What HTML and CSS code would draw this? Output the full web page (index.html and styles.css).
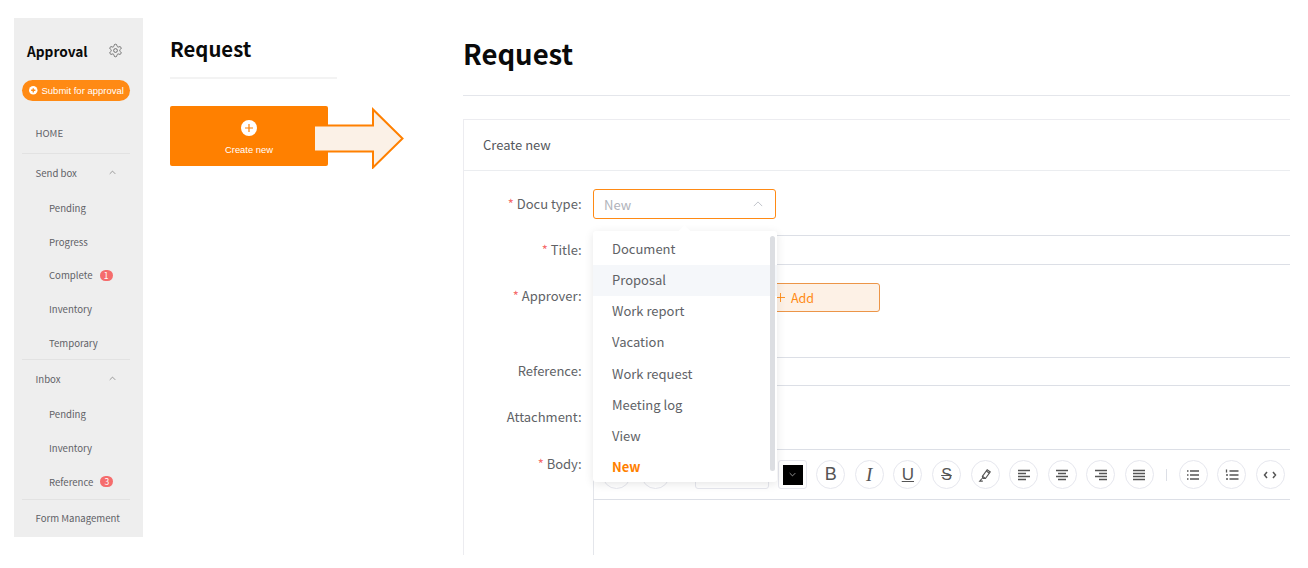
FILE: index.html
```html
<!DOCTYPE html>
<html lang="en">
<head>
<meta charset="utf-8">
<title>Request</title>
<link rel="stylesheet" href="styles.css">
</head>
<body>
<div class="page">
  <aside class="sidebar">
    <div class="side-head">
      <span class="side-title">Approval</span>
      <svg class="gear" viewBox="0 0 24 24" fill="none" stroke="#666" stroke-width="1.5"><path d="M12.22 2h-.44a2 2 0 0 0-2 2v.18a2 2 0 0 1-1 1.73l-.43.25a2 2 0 0 1-2 0l-.15-.08a2 2 0 0 0-2.73.73l-.22.38a2 2 0 0 0 .73 2.73l.15.1a2 2 0 0 1 1 1.72v.51a2 2 0 0 1-1 1.74l-.15.09a2 2 0 0 0-.73 2.73l.22.38a2 2 0 0 0 2.73.73l.15-.08a2 2 0 0 1 2 0l.43.25a2 2 0 0 1 1 1.73V20a2 2 0 0 0 2 2h.44a2 2 0 0 0 2-2v-.18a2 2 0 0 1 1-1.73l.43-.25a2 2 0 0 1 2 0l.15.08a2 2 0 0 0 2.73-.73l.22-.39a2 2 0 0 0-.73-2.73l-.15-.08a2 2 0 0 1-1-1.74v-.5a2 2 0 0 1 1-1.74l.15-.09a2 2 0 0 0 .73-2.73l-.22-.38a2 2 0 0 0-2.73-.73l-.15.08a2 2 0 0 1-2 0l-.43-.25a2 2 0 0 1-1-1.73V4a2 2 0 0 0-2-2z"/><circle cx="12" cy="12" r="3"/></svg>
    </div>
    <button class="submit">
      <svg class="submit-ico" viewBox="0 0 16 16"><circle cx="8" cy="8" r="8" fill="#fff"/><path d="M8 4v8M4 8h8" stroke="#ff8a14" stroke-width="2.4"/></svg>
      Submit for approval
    </button>
    <nav class="nav">
      <div class="nav-top home">HOME</div>
      <div class="nav-group">
        <div class="nav-top group-head">Send box <svg class="chev" viewBox="0 0 10 6" fill="none" stroke="#777" stroke-width="1"><path d="M1 5l4-4 4 4"/></svg></div>
        <div class="nav-sub">Pending</div>
        <div class="nav-sub">Progress</div>
        <div class="nav-sub">Complete <span class="badge">1</span></div>
        <div class="nav-sub">Inventory</div>
        <div class="nav-sub">Temporary</div>
      </div>
      <div class="nav-group">
        <div class="nav-top group-head">Inbox <svg class="chev" viewBox="0 0 10 6" fill="none" stroke="#777" stroke-width="1"><path d="M1 5l4-4 4 4"/></svg></div>
        <div class="nav-sub">Pending</div>
        <div class="nav-sub">Inventory</div>
        <div class="nav-sub">Reference <span class="badge">3</span></div>
      </div>
      <div class="nav-top form-mgmt">Form Management</div>
    </nav>
  </aside>

  <section class="middle">
    <h2 class="mid-title">Request</h2>
    <div class="create-wrap">
      <button class="create">
        <svg class="create-ico" viewBox="0 0 16 16"><circle cx="8" cy="8" r="8" fill="#fff"/><path d="M8 4v8M4 8h8" stroke="#ff8000" stroke-width="1.2"/></svg>
        <span>Create new</span>
      </button>
      <svg class="arrow" viewBox="0 0 90 62"><path d="M1 18.500h58V2.500L88.500 31.500 59 60.500V44.500H1z" fill="#fbf1e7"/><path d="M1 18.500h58V2.500L88.500 31.500 59 60.500V44.500H1" fill="none" stroke="#ff8000" stroke-width="2"/></svg>
    </div>
  </section>

  <main class="main">
    <h1 class="main-title">Request</h1>
    <div class="card">
      <div class="card-head">Create new</div>
      <div class="form">
        <div class="row row-docu">
          <label class="label"><i>*</i> Docu type:</label>
          <div class="field">
            <div class="select"><span>New</span><svg class="sel-chev" viewBox="0 0 12 7" fill="none" stroke="#b4b8c0" stroke-width="1"><path d="M1 6l5-5 5 5"/></svg></div>
            <div class="dropdown">
              <span class="pointer"></span>
              <ul class="options">
                <li>Document</li>
                <li class="hover">Proposal</li>
                <li>Work report</li>
                <li>Vacation</li>
                <li>Work request</li>
                <li>Meeting log</li>
                <li>View</li>
                <li class="selected">New</li>
              </ul>
              <span class="scroll"></span>
            </div>
          </div>
        </div>
        <div class="row row-title">
          <label class="label"><i>*</i> Title:</label>
          <div class="field"><div class="input"></div></div>
        </div>
        <div class="row row-appr">
          <label class="label"><i>*</i> Approver:</label>
          <div class="field"><button class="add"><svg class="add-ico" viewBox="0 0 10 10" stroke="#ff8a14" stroke-width="1"><path d="M5 0v10M0 5h10"/></svg> Add</button></div>
        </div>
        <div class="row row-ref">
          <label class="label">Reference:</label>
          <div class="field"><div class="input"></div></div>
        </div>
        <div class="row row-att">
          <label class="label">Attachment:</label>
          <div class="field"></div>
        </div>
        <div class="row row-body">
          <label class="label"><i>*</i> Body:</label>
          <div class="field editor">
            <div class="toolbar">
              <span class="tb tb-hidden"></span>
              <span class="tb tb-hidden"></span>
              <span class="tb-select"></span>
              <span class="tb-color"><span class="swatch"><svg viewBox="0 0 10 6" fill="none" stroke="#ccc" stroke-width="1"><path d="M1 1l4 4 4-4"/></svg></span></span>
              <span class="tb tb-b">B</span>
              <span class="tb tb-i">I</span>
              <span class="tb tb-u">U</span>
              <span class="tb tb-s">S</span>
              <span class="tb"><svg viewBox="0 0 16 16" fill="none" stroke="#555" stroke-width="1.300"><path d="M5 9.500L10.500 2l3.500 2.500L8.500 12H5.500z"/><path d="M5 9.500l3.500 2.500M9.500 3.500l3.500 2.500M4.500 12L2 15h3.500"/></svg></span>
              <span class="tb"><svg viewBox="0 0 14 12" stroke="#555" stroke-width="1.400"><path d="M1 1.500h12M1 4.500h8M1 7.500h12M1 10.500h8"/></svg></span>
              <span class="tb"><svg viewBox="0 0 14 12" stroke="#555" stroke-width="1.400"><path d="M1 1.500h12M3 4.500h8M1 7.500h12M3 10.500h8"/></svg></span>
              <span class="tb"><svg viewBox="0 0 14 12" stroke="#555" stroke-width="1.400"><path d="M1 1.500h12M5 4.500h8M1 7.500h12M5 10.500h8"/></svg></span>
              <span class="tb"><svg viewBox="0 0 14 12" stroke="#555" stroke-width="1.400"><path d="M1 1.500h12M1 4.500h12M1 7.500h12M1 10.500h12"/></svg></span>
              <span class="tb-sep"></span>
              <span class="tb"><svg viewBox="0 0 14 12" stroke="#555" stroke-width="1.300"><path d="M4 2h9M4 6h9M4 10h9M1 2h1.500M1 6h1.500M1 10h1.500"/></svg></span>
              <span class="tb"><svg viewBox="0 0 14 12" stroke="#555" stroke-width="1.300"><path d="M4.500 2h9M4.500 6h9M4.500 10h9M1.500 .5v3M1 6h2M1 10h2"/></svg></span>
              <span class="tb"><svg viewBox="0 0 14 10" fill="none" stroke="#555" stroke-width="1.500"><path d="M4 2L1.500 5 4 8M10 2l2.500 3L10 8"/></svg></span>
            </div>
            <div class="edit-area"></div>
          </div>
        </div>
      </div>
    </div>
  </main>
</div>
</body>
</html>
```

FILE: styles.css
```css
* { box-sizing: border-box; }
html, body { margin: 0; height: 100%; background: #fff; overflow: hidden; }
body { font-family: "Noto Sans CJK KR", "Noto Sans", sans-serif; color: #606266; }
button { font: inherit; padding: 0; cursor: pointer; }

.page { display: flex; height: 568px; padding: 18px 18px 13px 14px; }

/* sidebar */
.sidebar { flex: 0 0 129px; height: 519px; background: #eee; padding: 0 13px 0 8px; }
.side-head { display: flex; align-items: center; justify-content: space-between; height: 62px; padding: 3px 7px 0 5px; }
.side-title { font-size: 13.700px; font-weight: 700; color: #0a0a0a; }
.gear { width: 15px; height: 15px; margin-top: -1px; }
.submit { display: flex; align-items: center; gap: 4px; width: 108px; height: 21px; border: 0; border-radius: 11px; background: #ff8a14; color: #fff; font-family: "Liberation Sans", Arial, sans-serif; font-size: 9.500px; padding-left: 7px; white-space: nowrap; }
.submit-ico { width: 8.500px; height: 8.500px; flex: none; }
.nav { font-size: 9.600px; color: #5f6166; margin-top: 12px; }
.nav-top { padding-left: 13.500px; display: flex; align-items: center; }
.home { height: 41px; border-bottom: 1px solid #e2e2e2; }
.nav-group { border-bottom: 1px solid #e2e2e2; }
.group-head { height: 37px; justify-content: space-between; padding-right: 14px; }
.nav-sub { height: 33.700px; padding-left: 27px; display: flex; align-items: center; gap: 7px; }
.form-mgmt { height: 36px; }
.chev { width: 7px; height: 5px; }
.badge { display: inline-flex; align-items: center; justify-content: center; width: 13px; height: 11px; border-radius: 6px; background: #f56c6c; color: #fff; font-size: 8.500px; line-height: 1; }

/* middle */
.middle { flex: 0 0 167px; margin-left: 27px; }
.mid-title { margin: 0 0 27px; height: 61px; border-bottom: 2px solid #f3f3f3; font-size: 20.300px; line-height: 60px; font-weight: 700; color: #0a0a0a; }
.create-wrap { position: relative; }
.create { display: flex; flex-direction: column; align-items: center; width: 158px; height: 60px; border: 0; border-radius: 2px; background: #ff8000; color: #fff; font-family: "Liberation Sans", Arial, sans-serif; font-size: 9.400px; padding-top: 14px; }
.create-ico { width: 16px; height: 16px; margin-bottom: 8px; }
.arrow { position: absolute; left: 144px; top: 1px; width: 90px; height: 62px; }

/* main */
.main { flex: 1; margin-left: 126px; overflow: hidden; min-width: 0; }
.main-title { margin: 0 0 23px; height: 78px; border-bottom: 1px solid #e4e6eb; font-size: 27.500px; line-height: 71px; font-weight: 700; color: #0a0a0a; }
.card { border-left: 1px solid #ececf0; border-top: 1px solid #ececf0; height: 100%; }
.card-head { height: 51px; border-bottom: 1px solid #ebedf0; padding-left: 19px; font-size: 13px; line-height: 50px; color: #55575c; }
.form { padding-top: 18px; }
.row { display: flex; }
.label { flex: 0 0 117.500px; text-align: right; font-size: 13px; line-height: 29px; color: #606266; white-space: nowrap; }
.label i { color: #f56c6c; font-style: normal; }
.field { position: relative; flex: 1; margin-left: 11.500px; min-width: 0; }
.row-docu { height: 30px; margin-bottom: 16px; }
.row-title { height: 30px; margin-bottom: 18px; }
.row-appr { height: 29px; margin-bottom: 45px; }
.row-appr .label { line-height: 25px; }
.row-ref { height: 29px; margin-bottom: 17px; }
.row-ref .label, .row-att .label { line-height: 28px; }
.row-att { height: 29px; margin-bottom: 17px; }
.input { height: 100%; border: 1px solid #dcdfe6; border-right: 0; }
.select { display: flex; align-items: center; justify-content: space-between; width: 183px; height: 30px; border: 1px solid #ff8a14; border-radius: 3px; padding: 0 12px 0 10px; font-size: 13px; color: #b0b3ba; }
.sel-chev { width: 10px; height: 6px; }

/* dropdown */
.dropdown { position: absolute; z-index: 5; top: 42px; left: 0; width: 184px; height: 251px; background: #fff; border-radius: 3px; box-shadow: 0 2px 10px rgba(0, 0, 0, .1); padding-top: 2.500px; }
.pointer { position: absolute; top: -4px; left: 87px; width: 9px; height: 9px; background: #fff; transform: rotate(45deg); }
.options { list-style: none; margin: 0; padding: 0; font-size: 13px; color: #606266; }
.options li { height: 31.250px; line-height: 30px; padding-left: 19px; }
.options .hover { background: #f5f7fa; }
.options .selected { color: #ff8000; font-weight: 700; }
.scroll { position: absolute; top: 5px; right: 2px; width: 5px; height: 235px; border-radius: 3px; background: #dcdee2; }

/* approver */
.add { display: flex; align-items: center; justify-content: center; gap: 6px; width: 170px; height: 29px; margin-left: 117px; border: 1px solid #ec9548; border-radius: 3px; background: #fdf1e6; color: #ff8a14; font-size: 12.500px; }
.add-ico { width: 9px; height: 9px; }

/* editor */
.row-body { height: 106px; }
.row-body .label { line-height: 29px; }
.editor { border-left: 1px solid #e4e6eb; }
.toolbar { display: flex; align-items: center; height: 51px; border-top: 1px solid #dcdfe6; border-bottom: 1px solid #dcdfe6; padding-left: 9px; margin-left: -1px; }
.tb { display: flex; align-items: center; justify-content: center; flex: none; width: 29px; height: 29px; margin-right: 9.600px; border: 1px solid #e6e7ee; border-radius: 50%; font-family: "DejaVu Sans", sans-serif; font-size: 14px; color: #555; }
.tb svg { width: 14px; height: 14px; }
.tb-b { font-family: "Liberation Sans", sans-serif; font-size: 18px; }
.tb-i { font-family: "Liberation Serif", serif; font-style: italic; font-size: 19px; }
.tb-u { text-decoration: underline; font-size: 17px; font-family: "Liberation Sans", sans-serif; }
.tb-s { text-decoration: line-through; font-size: 16px; font-family: "Liberation Sans", sans-serif; }
.tb-select { flex: none; width: 74px; height: 29px; margin: 0 9px 0 16px; border: 1px solid #e6e7ee; border-radius: 3px; }
.tb-color { display: flex; align-items: center; justify-content: center; flex: none; width: 29px; height: 29px; margin-right: 9px; border: 1px solid #e6e7ee; border-radius: 3px; }
.swatch { display: flex; align-items: center; justify-content: center; width: 20px; height: 20px; background: #000; }
.swatch svg { width: 7px; height: 5px; }
.tb-sep { flex: none; width: 1px; height: 12px; margin: 0 11.500px 0 2.500px; background: #dcdfe6; }
.edit-area { height: 56px; }
```
